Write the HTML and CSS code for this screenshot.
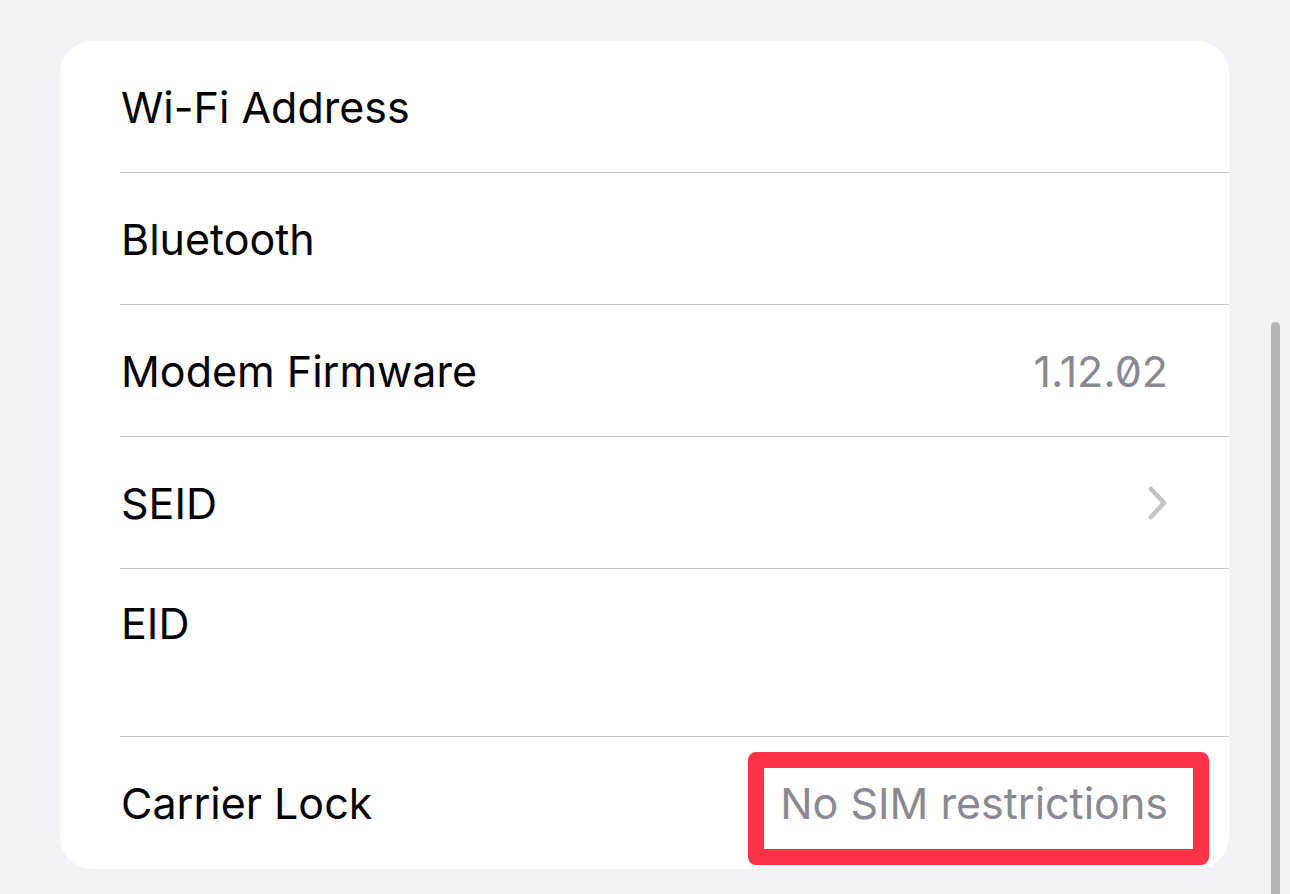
FILE: index.html
```html
<!DOCTYPE html>
<html lang="en">
<head>
    <meta charset="UTF-8">
    <meta name="viewport" content="width=device-width, initial-scale=1.0">
    <title>About</title>
    <link rel="stylesheet" href="styles.css">
</head>
<body>
    <div class="list">
        <div class="row">
            <span class="label">Wi-Fi Address</span>
        </div>
        <div class="row">
            <span class="label">Bluetooth</span>
        </div>
        <div class="row">
            <span class="label">Modem Firmware</span>
            <span class="value mono">1.12.02</span>
        </div>
        <div class="row">
            <span class="label">SEID</span>
            <svg class="chevron" width="20" height="34" viewBox="0 0 20 34">
                <path d="M3 3 L16 17 L3 31" fill="none" stroke="#c4c4c7" stroke-width="4.5" stroke-linecap="round" stroke-linejoin="round"/>
            </svg>
        </div>
        <div class="row tall">
            <span class="label">EID</span>
        </div>
        <div class="row last">
            <span class="label">Carrier Lock</span>
            <span class="value highlighted">No SIM restrictions</span>
        </div>
    </div>
    <div class="scrollbar"></div>
</body>
</html>
```

FILE: styles.css
```css
body {
    margin: 0;
    padding: 0;
    background-color: #f2f2f7;
    font-family: Inter, "Noto Sans", sans-serif;
    height: 894px;
    overflow: hidden;
    position: relative;
}

.list {
    margin: 41px 0 0 60px;
    width: 1169px;
    background-color: #fff;
    border-radius: 32px;
}

.row {
    margin-left: 60px;
    padding-right: 61px;
    height: 131px;
    display: flex;
    align-items: center;
    justify-content: space-between;
    border-bottom: 1px solid #c8c8cb;
    position: relative;
}

.row.tall {
    height: 167px;
    align-items: flex-start;
}

.row.tall .label {
    margin-top: 28px;
}

.row.last {
    border-bottom: none;
    height: 132px;
}

.label {
    font-size: 43px;
    line-height: 52px;
    color: #000;
    margin-left: 1px;
}

.value {
    font-size: 43px;
    line-height: 52px;
    color: #8a8a8e;
}

.mono {
    font-feature-settings: "zero" 1;
}

.highlighted::after {
    content: "";
    position: absolute;
    right: 20px;
    top: 15px;
    width: 429px;
    height: 81px;
    border: 16px solid #fd3447;
    border-radius: 8px;
}

.scrollbar {
    position: absolute;
    left: 1271px;
    top: 322px;
    width: 9px;
    height: 600px;
    border-radius: 5px;
    background-color: #b6b6ba;
}
```
